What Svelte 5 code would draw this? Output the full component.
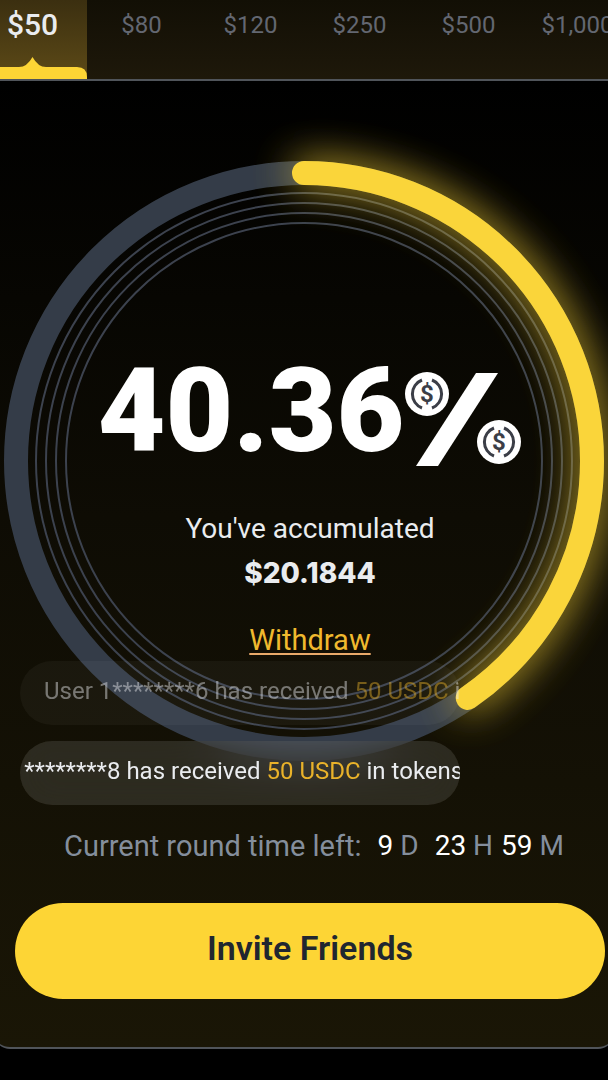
<script lang="ts">
  const tiers = ["$50", "$80", "$120", "$250", "$500", "$1,000"];
  let active = $state(0);

  const percent = 40.36;
  const radius = 288;
  const rings = [268, 258, 248, 238];
  const circumference = 2 * Math.PI * radius;

  const messages = [
    { user: "User 1********6", scroll: 0, faded: true },
    { user: "User 1********8", scroll: 88, faded: false },
  ];

  const timeLeft = [
    { value: 9, unit: "D" },
    { value: 23, unit: "H" },
    { value: 59, unit: "M" },
  ];

  const coins = [
    { x: 23, y: 24 },
    { x: 95, y: 72 },
  ];
</script>

<main>
  <nav class="tiers">
    {#each tiers as tier, i}
      <button class="tier" class:active={i === active} onclick={() => (active = i)}>
        {tier}
        {#if i === active}
          <svg class="marker" viewBox="0 0 109 22" aria-hidden="true">
            <path d="M0 22V18Q0 10 8 10H41Q49 10 54.5 0Q60 10 68 10H99Q109 10 109 20V22Z" />
          </svg>
        {/if}
      </button>
    {/each}
  </nav>

  <section class="card">
    <div class="gauge">
      <svg class="dial" viewBox="0 0 600 600" aria-hidden="true">
        <defs>
          <filter id="glow" x="-20%" y="-20%" width="140%" height="140%">
            <feGaussianBlur stdDeviation="20" />
          </filter>
        </defs>
        <g transform="rotate(-90 300 300)">
          <circle class="track" cx="300" cy="300" r={radius} />
          {#each rings as r}
            <circle class="ring" cx="300" cy="300" {r} />
          {/each}
          <g filter="url(#glow)" opacity="0.9">
            <circle
              class="progress"
              cx="300"
              cy="300"
              r={radius}
              stroke-dasharray="{(circumference * percent) / 100} {circumference}"
            />
          </g>
          <circle
            class="progress"
            cx="300"
            cy="300"
            r={radius}
            stroke-dasharray="{(circumference * percent) / 100} {circumference}"
          />
        </g>
      </svg>

      <div class="info">
        <div class="percent">
          <span>{percent}</span>
          <svg width="118" height="98" viewBox="0 0 118 98" role="img" aria-label="percent">
            <path d="M72 3H94L34 96H12Z" fill="#fff" />
            {#each coins as coin}
              <g transform="translate({coin.x} {coin.y})">
                <circle r="22" fill="#fff" />
                <path
                  d="M-5 -14A15 15 0 0 0 -5 14M5 -14A15 15 0 0 1 5 14"
                  fill="none"
                  stroke="#3b3e47"
                  stroke-width="3"
                />
                <text class="coin" y="8" text-anchor="middle">$</text>
              </g>
            {/each}
          </svg>
        </div>
        <p class="label">You've accumulated</p>
        <p class="amount">$20.1844</p>
        <a class="withdraw" href="#withdraw">Withdraw</a>
      </div>
    </div>

    <div class="ticker">
      {#each messages as message}
        <div class="message" class:faded={message.faded}>
          <p style="margin-left: {24 - message.scroll}px">
            {message.user} has received <em>50 USDC</em> in tokens
          </p>
        </div>
      {/each}
    </div>

    <div class="countdown">
      <span>Current round time left:</span>
      {#each timeLeft as part}
        <span class="part"><b>{part.value}</b> {part.unit}</span>
      {/each}
    </div>

    <button class="invite">Invite Friends</button>
  </section>
</main>

<style>
  :global(body) {
    margin: 0;
    background: #000;
  }

  main {
    overflow: hidden;
    font-family: Roboto, "Liberation Sans", sans-serif;
    color: #eaecef;
  }

  p {
    margin: 0;
  }

  button {
    border: 0;
    font-family: inherit;
    cursor: pointer;
  }

  .tiers {
    display: flex;
    margin-left: -22px;
    background: linear-gradient(#120f05, #1e180a);
  }

  .tier {
    position: relative;
    flex: none;
    width: 109px;
    height: 79px;
    padding: 0 0 30px;
    background: none;
    color: #636771;
    font-size: 24px;
    font-weight: 400;
  }

  .tier.active {
    background: linear-gradient(#3b2f10, #5d4a17);
    color: #eaecef;
    font-size: 30px;
    font-weight: 500;
  }

  .marker {
    position: absolute;
    left: 0;
    bottom: 0;
    width: 100%;
    fill: #fdd535;
  }

  .card {
    margin: 0 -6px;
    padding: 80px 9px 48px 21px;
    border: solid #50545a;
    border-width: 2px 0;
    border-radius: 0 0 16px 16px;
    background: linear-gradient(#000, #0e0c04 45%, #1a1606);
  }

  .gauge {
    display: grid;
    justify-items: center;
    margin-right: 1px;
    margin-left: -11px;
  }

  .gauge > * {
    grid-area: 1 / 1;
  }

  .dial {
    width: 100%;
    max-width: 600px;
    overflow: visible;
  }

  .dial circle {
    fill: none;
  }

  .track {
    stroke: #343c48;
    stroke-width: 24;
  }

  .ring {
    stroke: #3c424e;
    stroke-width: 2;
  }

  .dial .progress {
    stroke: #fad53a;
    stroke-width: 24;
    stroke-linecap: round;
  }

  .info {
    z-index: 1;
    display: flex;
    flex-direction: column;
    align-items: center;
    padding: 200px 0 0 12px;
  }

  .percent {
    display: flex;
    align-items: center;
    height: 100px;
    margin-bottom: 48px;
    color: #fff;
    font-size: 117px;
    font-weight: 900;
    line-height: 102px;
  }

  .percent svg {
    margin-top: 16px;
  }

  .coin {
    fill: #3b3e47;
    font-size: 24px;
    font-weight: 700;
  }

  .label {
    font-size: 28px;
    line-height: 40px;
  }

  .amount {
    font-family: Inter, sans-serif;
    font-size: 28px;
    font-weight: 800;
    line-height: 48px;
  }

  .withdraw {
    margin-top: 24px;
    color: #f0b92e;
    font-size: 29px;
    line-height: 38px;
    text-decoration-color: #e8a96a;
    text-decoration-thickness: 2px;
    text-underline-offset: 3px;
  }

  .ticker {
    position: relative;
    z-index: 2;
    display: grid;
    gap: 16px;
    max-width: 440px;
    margin-top: -100px;
    margin-left: 5px;
  }

  .message {
    overflow: hidden;
    height: 64px;
    border-radius: 32px;
    background: rgba(255, 255, 255, 0.11);
    backdrop-filter: blur(20px);
    font-size: 24px;
    line-height: 60px;
    white-space: nowrap;
  }

  .message.faded {
    background: rgba(255, 255, 255, 0.04);
    backdrop-filter: none;
  }

  .faded p {
    opacity: 0.45;
  }

  .message em {
    color: #e9b22a;
    font-style: normal;
  }

  .countdown {
    display: flex;
    justify-content: center;
    gap: 16px;
    margin: 20px 0 36px;
    padding-left: 8px;
    color: #848e9c;
    font-size: 28px;
    line-height: 42px;
  }

  .countdown > :first-child {
    font-size: 29px;
  }

  .countdown b {
    color: #fff;
    font-weight: 400;
  }

  .part + .part + .part {
    margin-left: -8px;
  }

  .invite {
    display: block;
    width: 100%;
    height: 96px;
    padding: 0 0 6px;
    border-radius: 48px;
    background: #fdd535;
    color: #202630;
    font-size: 34px;
    font-weight: 600;
  }
</style>
